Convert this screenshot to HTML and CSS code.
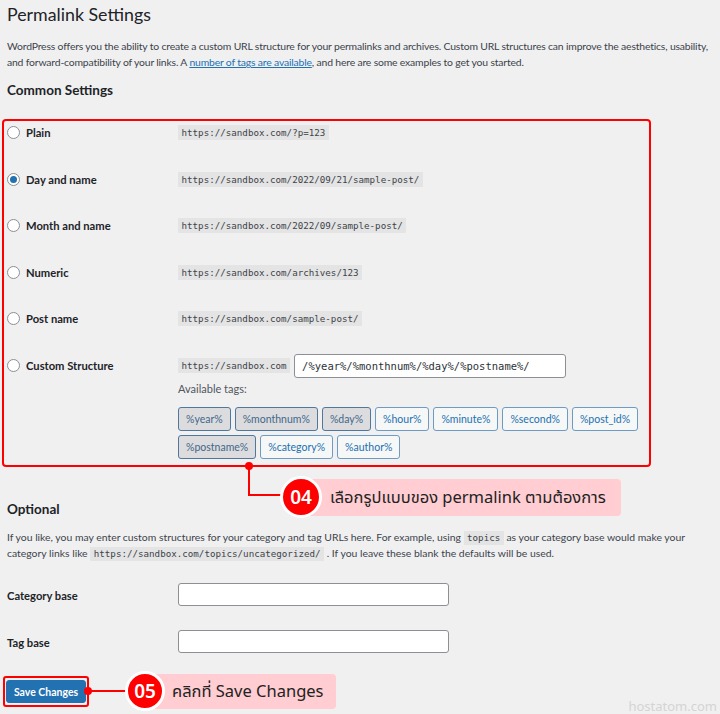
FILE: index.html
```html
<!DOCTYPE html>
<html lang="en">
<head>
<meta charset="utf-8">
<title>Permalink Settings</title>
<link rel="stylesheet" href="styles.css">
</head>
<body>
<div class="page">
  <h1 class="title">Permalink Settings</h1>
  <p class="intro">WordPress offers you the ability to create a custom URL structure for your permalinks and archives. Custom URL structures can improve the aesthetics, usability, and forward-compatibility of your links. A <a href="#" class="link">number of tags are available</a>, and here are some examples to get you started.</p>
  <h2 class="section">Common Settings</h2>

  <div class="highlight">
    <div class="pl-row">
      <label class="pl-label"><span class="radio"></span>Plain</label>
      <div class="pl-value"><code class="code">https://sandbox.com/?p=123</code></div>
    </div>
    <div class="pl-row">
      <label class="pl-label"><span class="radio checked"></span>Day and name</label>
      <div class="pl-value"><code class="code">https://sandbox.com/2022/09/21/sample-post/</code></div>
    </div>
    <div class="pl-row">
      <label class="pl-label"><span class="radio"></span>Month and name</label>
      <div class="pl-value"><code class="code">https://sandbox.com/2022/09/sample-post/</code></div>
    </div>
    <div class="pl-row">
      <label class="pl-label"><span class="radio"></span>Numeric</label>
      <div class="pl-value"><code class="code">https://sandbox.com/archives/123</code></div>
    </div>
    <div class="pl-row">
      <label class="pl-label"><span class="radio"></span>Post name</label>
      <div class="pl-value"><code class="code">https://sandbox.com/sample-post/</code></div>
    </div>
    <div class="pl-row custom">
      <label class="pl-label"><span class="radio"></span>Custom Structure</label>
      <div class="pl-custom">
        <div class="custom-line">
          <code class="code">https://sandbox.com</code>
          <input class="text-input structure" type="text" value="/%year%/%monthnum%/%day%/%postname%/">
        </div>
        <div class="avail">Available tags:</div>
        <div class="tags">
          <span class="tag active">%year%</span>
          <span class="tag active">%monthnum%</span>
          <span class="tag active">%day%</span>
          <span class="tag">%hour%</span>
          <span class="tag">%minute%</span>
          <span class="tag">%second%</span>
          <span class="tag">%post_id%</span>
        </div>
        <div class="tags second">
          <span class="tag active">%postname%</span>
          <span class="tag">%category%</span>
          <span class="tag">%author%</span>
        </div>
      </div>
    </div>
  </div>

  <h2 class="section optional">Optional</h2>
  <p class="opt-desc">If you like, you may enter custom structures for your category and tag URLs here. For example, using <code class="code">topics</code> as your category base would make your category links like <code class="code">https://sandbox.com/topics/uncategorized/</code> . If you leave these blank the defaults will be used.</p>

  <div class="field-row first">
    <label class="field-label">Category base</label>
    <input class="text-input base" type="text">
  </div>
  <div class="field-row">
    <label class="field-label">Tag base</label>
    <input class="text-input base" type="text">
  </div>

  <div class="save-row">
    <div class="save-outline"><button class="save-btn" type="button">Save Changes</button></div>
  </div>

  <!-- annotation 04 -->
  <span class="dot dot-04"></span>
  <span class="vline line-04v"></span>
  <span class="hline line-04h"></span>
  <div class="callout callout-04">เลือกรูปแบบของ permalink ตามต้องการ</div>
  <div class="badge badge-04">04</div>

  <!-- annotation 05 -->
  <span class="dot dot-05"></span>
  <span class="hline line-05h"></span>
  <div class="callout callout-05">คลิกที่ Save Changes</div>
  <div class="badge badge-05">05</div>

  <div class="watermark">hostatom.com</div>
</div>
</body>
</html>
```

FILE: styles.css
```css
* { box-sizing: border-box; }

html, body {
  margin: 0;
  padding: 0;
  background: #f0f0f1;
}

.page {
  position: relative;
  width: 720px;
  height: 714px;
  overflow: hidden;
  padding-left: 7px;
  font-family: Lato, "Noto Sans", sans-serif;
  color: #3c434a;
}

.title {
  margin: 0;
  font-size: 17.8px;
  line-height: 28px;
  font-weight: 400;
  color: #1d2327;
}

.intro {
  margin: 10px 0 0;
  font-size: 10.4px;
  letter-spacing: -0.17px;
  line-height: 16px;
  width: 713px;
}

.link { color: #2271b1; text-decoration: underline; }

.section {
  margin: 10px 0 0;
  font-size: 13.5px;
  line-height: 20px;
  font-weight: 700;
  color: #1d2327;
}

.highlight {
  margin: 19px 0 0 -5px;
  width: 649px;
  border: 2px solid #ff0000;
  border-radius: 4px;
  padding: 0 0 6px 3px;
}

.pl-row {
  display: grid;
  grid-template-columns: 171px 1fr;
  height: 46.5px;
  align-items: start;
}

.pl-row.custom { height: auto; }

.pl-label {
  display: flex;
  align-items: center;
  gap: 6px;
  padding-top: 4px;
  font-size: 11.2px;
  line-height: 15px;
  font-weight: 700;
  color: #1d2327;
}

.pl-value { padding-top: 4px; display: flex; }

.radio {
  width: 13px;
  height: 13px;
  border-radius: 50%;
  border: 1px solid #8c8f94;
  background: #fff;
  display: inline-flex;
  align-items: center;
  justify-content: center;
  flex: none;
}
.radio.checked::after {
  content: "";
  width: 7px;
  height: 7px;
  border-radius: 50%;
  background: #2271b1;
}

.code {
  display: inline-block;
  font-family: "DejaVu Sans Mono", "Liberation Mono", monospace;
  font-size: 9.2px;
  line-height: 15px;
  padding: 0 3.5px;
  background: #e4e4e4;
  color: #3c434a;
  letter-spacing: 0;
}

.custom-line {
  display: flex;
  align-items: center;
  gap: 4px;
  height: 24px;
}

.text-input {
  height: 24px;
  border: 1px solid #8c8f94;
  border-radius: 3px;
  background: #fff;
  font-family: "DejaVu Sans Mono", "Liberation Mono", monospace;
  font-size: 10.5px;
  color: #2c3338;
  padding: 0 7px;
  outline: none;
}

.structure { width: 272px; }

.avail {
  margin-top: 3px;
  font-size: 11px;
  line-height: 15px;
  color: #50575e;
}

.tags {
  margin-top: 11.5px;
  display: flex;
  gap: 4px;
}
.tags.second { margin-top: 4px; }

.tag {
  display: inline-flex;
  align-items: center;
  height: 24px;
  padding: 0 7px;
  border: 1px solid #6e9bc4;
  border-radius: 3px;
  background: #f6f7f7;
  color: #2271b1;
  font-size: 10.5px;
}
.tag.active {
  background: #dcdcde;
  border-color: #50779c;
  color: #41678b;
}

.optional { margin-top: 32px; }

.opt-desc {
  margin: 9.5px 0 0;
  font-size: 10.4px;
  line-height: 16px;
  width: 690px;
}
.opt-desc .code { line-height: 14px; }

.field-row {
  display: grid;
  grid-template-columns: 171px 271px;
  align-items: center;
  margin-top: 24px;
}
.field-row.first { margin-top: 22.5px; }

.field-label {
  font-size: 11.2px;
  font-weight: 700;
  color: #1d2327;
  padding-top: 2px;
}

.base { width: 271px; height: 23px; }

.save-row { margin-top: 23px; }

.save-outline {
  display: inline-block;
  margin-left: -4px;
  border: 2px solid #ff0000;
  border-radius: 3px;
  padding: 2px 1px;
}

.save-btn {
  display: block;
  width: 80px;
  height: 23px;
  border: 1px solid #2271b1;
  border-radius: 3px;
  background: #2271b1;
  color: #fff;
  font-family: Lato, "Noto Sans", sans-serif;
  font-size: 10.5px;
  font-weight: 700;
  padding: 0;
}

/* annotations */
.dot {
  position: absolute;
  width: 8px;
  height: 8px;
  border-radius: 50%;
  background: #ff0000;
}
.vline, .hline {
  position: absolute;
  background: #ff0000;
}
.dot-04 { left: 245px; top: 462px; }
.line-04v { left: 248px; top: 466px; width: 2px; height: 30px; }
.line-04h { left: 248px; top: 494px; width: 40px; height: 2px; }

.callout {
  position: absolute;
  background: #ffcdd2;
  border-radius: 4px;
  color: #222;
  font-family: "Noto Sans Thai", "Noto Sans", "Loma", "Garuda", sans-serif;
  font-size: 16.5px;
  font-weight: 400;
  display: flex;
  align-items: center;
}
.callout-04 { left: 300px; top: 479px; width: 321px; height: 37px; padding-left: 30px; }

.badge {
  position: absolute;
  width: 42px;
  height: 42px;
  border-radius: 50%;
  background: #ff0000;
  border: 3px solid #fff;
  color: #fff;
  font-family: "Noto Sans", sans-serif;
  font-weight: 600;
  font-size: 19px;
  display: flex;
  align-items: center;
  justify-content: center;
}
.badge-04 { left: 280px; top: 476px; }

.dot-05 { left: 84px; top: 687px; }
.line-05h { left: 88px; top: 690px; width: 40px; height: 2px; }
.callout-05 { left: 145px; top: 674px; width: 191px; height: 35px; padding-left: 27px; }
.badge-05 { left: 125px; top: 671px; width: 40px; height: 40px; }

.watermark {
  position: absolute;
  right: 3px;
  bottom: 0;
  font-family: "Noto Sans", sans-serif;
  font-size: 13px;
  line-height: 16px;
  color: #d4d4d4;
}
```
